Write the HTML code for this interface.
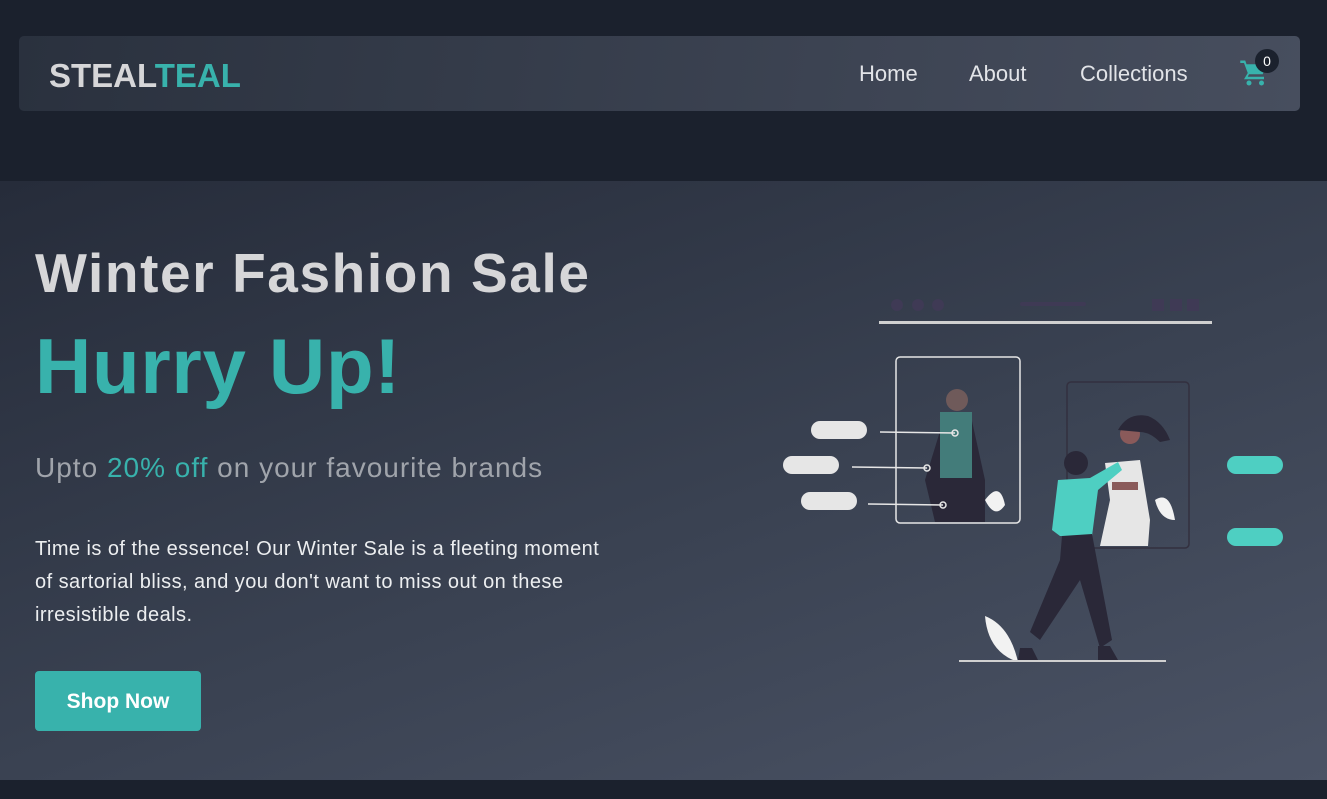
<!DOCTYPE html>
<html><head><meta charset="utf-8"><style>
*{margin:0;padding:0;box-sizing:border-box}
body{width:1327px;height:799px;background:#1b212d;font-family:"Liberation Sans",sans-serif;position:relative;overflow:hidden}
.nav{position:absolute;left:19px;top:36px;width:1281px;height:75px;border-radius:5px;background:linear-gradient(100deg,#2a313e,#474e5e)}
.logo{position:absolute;left:30px;top:21px;font-size:33px;font-weight:bold;color:#d6d6d8;letter-spacing:0}
.logo span{color:#38b2ac}
.nav a{position:absolute;top:25px;font-size:22px;color:#e2e4e8;text-decoration:none}
.badge{position:absolute;left:1236px;top:13px;width:24px;height:24px;border-radius:50%;background:#1b212d;color:#fff;font-size:14px;text-align:center;line-height:24px}
.hero{position:absolute;left:0;top:181px;width:1327px;height:599px;background:linear-gradient(160deg,#262c3a 0%,#3a4252 55%,#4b5365 100%)}
h1{position:absolute;left:35px;top:60px;font-size:55px;color:#d6d6d8;font-weight:bold;letter-spacing:1.6px}
h2{position:absolute;left:35px;top:140px;font-size:78px;color:#38b2ac;font-weight:bold;letter-spacing:0.7px}
.sub{position:absolute;left:35px;top:271px;font-size:28px;color:#a0a4ab;letter-spacing:1px}
.sub span{color:#38b2ac}
.p{position:absolute;left:35px;top:352px;width:580px;font-size:20px;line-height:33px;color:#eceef0;letter-spacing:0.45px}
.btn{position:absolute;left:35px;top:490px;width:166px;height:60px;border-radius:4px;background:#38b2ac;color:#fff;font-size:21px;font-weight:bold;text-align:center;line-height:62px}
</style></head><body>
<div class="nav">
<div class="logo">STEAL<span>TEAL</span></div>
<a style="left:840px">Home</a><a style="left:950px">About</a><a style="left:1061px">Collections</a>
<svg style="position:absolute;left:1220px;top:22px" width="30" height="30" viewBox="0 0 24 24"><path fill="#38b2ac" d="M1 2h4l1 3h16l-3 8H8l-1 2h13v2H4l3-5L4 4H1z"/><circle cx="8" cy="20" r="2" fill="#38b2ac"/><circle cx="18" cy="20" r="2" fill="#38b2ac"/></svg>
<div class="badge">0</div>
</div>
<div class="hero">
<h1>Winter Fashion Sale</h1>
<h2>Hurry Up!</h2>
<div class="sub">Upto <span>20% off</span> on your favourite brands</div>
<div class="p">Time is of the essence! Our Winter Sale is a fleeting moment of sartorial bliss, and you don't want to miss out on these irresistible deals.</div>
<div class="btn">Shop Now</div>
</div>
<svg style="position:absolute;left:0;top:0" width="1327" height="799">
<g fill="#3f3a55"><circle cx="897" cy="305" r="6"/><circle cx="918" cy="305" r="6"/><circle cx="938" cy="305" r="6"/><rect x="1020" y="302" width="66" height="4" rx="2"/><rect x="1152" y="299" width="12" height="12"/><rect x="1170" y="299" width="12" height="12"/><rect x="1187" y="299" width="12" height="12"/></g>
<rect x="879" y="321" width="333" height="3" fill="#d0d0d0"/>
<rect x="896" y="357" width="124" height="166" rx="4" fill="none" stroke="#e6e6e6" stroke-width="1.5"/>
<rect x="1067" y="382" width="122" height="166" rx="4" fill="none" stroke="#33303f" stroke-width="1.5"/>
<circle cx="957" cy="400" r="11" fill="#6f5a5a"/>
<path d="M945 415 L970 412 L985 480 L985 522 L935 522 L925 480Z" fill="#2a2838"/>
<rect x="940" y="412" width="32" height="66" fill="#437c7a"/>
<g fill="#e6e6e6"><rect x="811" y="421" width="56" height="18" rx="9"/><rect x="783" y="456" width="56" height="18" rx="9"/><rect x="801" y="492" width="56" height="18" rx="9"/></g>
<g stroke="#e6e6e6" stroke-width="1.5" fill="none"><path d="M880 432L955 433M852 467L927 468M868 504L943 505"/><circle cx="955" cy="433" r="3"/><circle cx="927" cy="468" r="3"/><circle cx="943" cy="505" r="3"/></g>
<g fill="#4ecfc2"><rect x="1227" y="456" width="56" height="18" rx="9"/><rect x="1227" y="528" width="56" height="18" rx="9"/></g>
<path d="M1105 463 L1140 460 L1150 520 L1148 546 L1100 546 L1110 500Z" fill="#e6e6e6"/>
<rect x="1112" y="482" width="26" height="8" fill="#8a5a5a"/>
<circle cx="1130" cy="434" r="10" fill="#8a5a5a"/><path d="M1118 430 q10-18 30-14 q15 6 22 24 l-10 2 q-10-10-20-10 z" fill="#2a2838"/>
<g fill="#f2f2f2"><path d="M985 500 q15-20 20 5 q-10 15-20-5z"/><path d="M1155 500 q15-10 20 20 q-15 0-20-20z"/><path d="M985 616 q25 10 33 46 q-30-10-33-46z"/></g>
<circle cx="1076" cy="463" r="12" fill="#2a2838"/>
<path d="M1058 480 L1090 478 L1118 462 L1122 470 L1098 490 L1092 536 L1060 536 L1052 530 Z" fill="#4ecfc2"/>
<path d="M1062 536 L1092 534 L1112 640 L1100 648 L1080 580 L1040 640 L1030 632 L1060 560Z" fill="#2a2838"/>
<path d="M1020 648 l12 0 l6 12 l-20 0z M1098 646 l12 0 l8 14 l-20 0z" fill="#2a2838"/>
<rect x="959" y="660" width="207" height="2" fill="#d0d0d0"/>
</svg>
</body></html>
